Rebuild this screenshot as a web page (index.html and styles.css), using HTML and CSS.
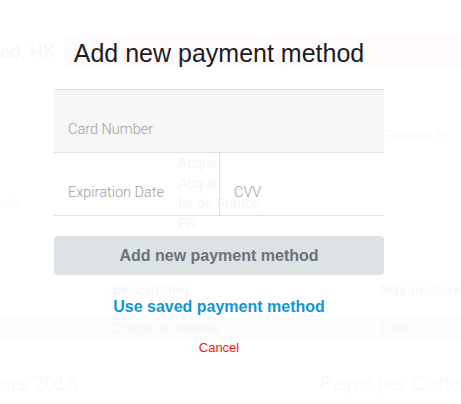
FILE: index.html
```html
<!DOCTYPE html>
<html lang="en">
<head>
<meta charset="utf-8">
<title>Add new payment method</title>
<link rel="stylesheet" href="styles.css">
</head>
<body>
<div class="page">
  <div class="bg-head">
    <span class="bg-company">ed, HK</span>
    <div class="bg-banner"><span class="bg-banner-text">Annuler la com</span></div>
  </div>
  <div class="bg-status">Passée le</div>
  <div class="bg-info">
    <div class="bg-label">ails</div>
    <div class="bg-address">
      <div>Acquit</div>
      <div>Acquit</div>
      <div>Île de France,</div>
      <div>FR</div>
    </div>
  </div>
  <div class="bg-thead">
    <span class="bg-col1">Description</span>
    <span class="bg-col2">Prix unitaire</span>
  </div>
  <div class="bg-trow">
    <span class="bg-col1">Coque de bateau</span>
    <span class="bg-col2">0,00</span>
  </div>
  <div class="bg-foot">
    <span class="bg-date">ars 2016</span>
    <span class="bg-pay">Payer par Carte</span>
  </div>
</div>

<div class="overlay">
  <div class="modal">
    <h1 class="title">Add new payment method</h1>
    <div class="fields">
      <div class="field card"><span class="ph">Card Number</span></div>
      <div class="row">
        <div class="field exp"><span class="ph">Expiration Date</span></div>
        <div class="field cvv"><span class="ph">CVV</span></div>
      </div>
    </div>
    <button class="submit">Add new payment method</button>
    <a class="saved">Use saved payment method</a>
    <a class="cancel">Cancel</a>
  </div>
</div>
</body>
</html>
```

FILE: styles.css
```css
* { box-sizing: border-box; }

html, body {
  margin: 0;
  width: 461px;
  height: 404px;
  overflow: hidden;
}

body {
  position: relative;
  background: #ffffff;
  font-family: "Liberation Sans", Arial, sans-serif;
}

/* faint page behind the overlay */
.page {
  color: #fafafa;
  white-space: nowrap;
  overflow: hidden;
}

.bg-head {
  margin-top: 37px;
  height: 31px;
  display: flex;
  align-items: center;
}

.bg-company {
  width: 65px;
  font-size: 18px;
  color: #f6f6f6;
}

.bg-banner {
  flex: 1;
  height: 31px;
  background: #fffafa;
  display: flex;
  align-items: center;
  justify-content: flex-end;
  overflow: hidden;
}

.bg-banner-text {
  color: #ffffff;
  font-size: 16px;
  padding-right: 4px;
}

.bg-status {
  margin-top: 59px;
  padding-left: 385px;
  font-size: 14px;
  line-height: 16px;
  color: #f9f9f9;
}

.bg-info {
  margin-top: 10px;
  display: flex;
  font-size: 14px;
  line-height: 20px;
}

.bg-label {
  width: 178px;
  padding-top: 40px;
  color: #f8f8f8;
}

.bg-address {
  color: #f5f5f5;
}

.bg-thead,
.bg-trow {
  display: flex;
  font-size: 14px;
  line-height: 20px;
}

.bg-thead {
  margin-top: 47px;
  font-weight: 700;
  color: #f8f8f8;
}

.bg-trow {
  margin-top: 16px;
  height: 24px;
  align-items: center;
  background: #fcfcfc;
  color: #f6f6f6;
}

.bg-col1 {
  width: 381px;
  padding-left: 112px;
}

.bg-foot {
  margin-top: 32px;
  display: flex;
  font-size: 20px;
  line-height: 22px;
  color: #f9f9f9;
}

.bg-date {
  width: 345px;
}

/* modal */
.overlay {
  position: absolute;
  inset: 0;
}

.modal {
  margin-left: 54px;
  width: 330px;
  padding-top: 39px;
  display: flex;
  flex-direction: column;
  text-align: center;
}

.title {
  margin: 0;
  font-size: 25px;
  line-height: 29px;
  font-weight: 400;
  color: #1a1e22;
}

.fields {
  margin-top: 21px;
  border-top: 1px solid #d8e0e2;
  text-align: left;
}

.field {
  height: 63px;
  padding: 31px 14px 0;
  border-bottom: 1px solid #dde3e5;
  font-family: Roboto, "Liberation Sans", sans-serif;
  font-weight: 300;
  font-size: 14.5px;
  line-height: 18px;
  color: #a0a0a0;
}

.card {
  background: #f7f7f7;
}

.row {
  display: flex;
}

.exp {
  width: 166px;
  border-right: 1px solid #dde3e5;
}

.cvv {
  flex: 1;
}

.submit {
  margin-top: 20px;
  height: 39px;
  border: 0;
  border-radius: 4px;
  background: #dde2e5;
  font-family: "Liberation Sans", Arial, sans-serif;
  font-weight: 700;
  font-size: 16px;
  line-height: 39px;
  color: #6b7378;
  padding: 0;
}

.saved {
  margin-top: 22px;
  font-weight: 700;
  font-size: 16px;
  line-height: 20px;
  color: #1196d4;
}

.cancel {
  margin-top: 23px;
  font-size: 13px;
  line-height: 16px;
  color: #f31b1b;
}
```
